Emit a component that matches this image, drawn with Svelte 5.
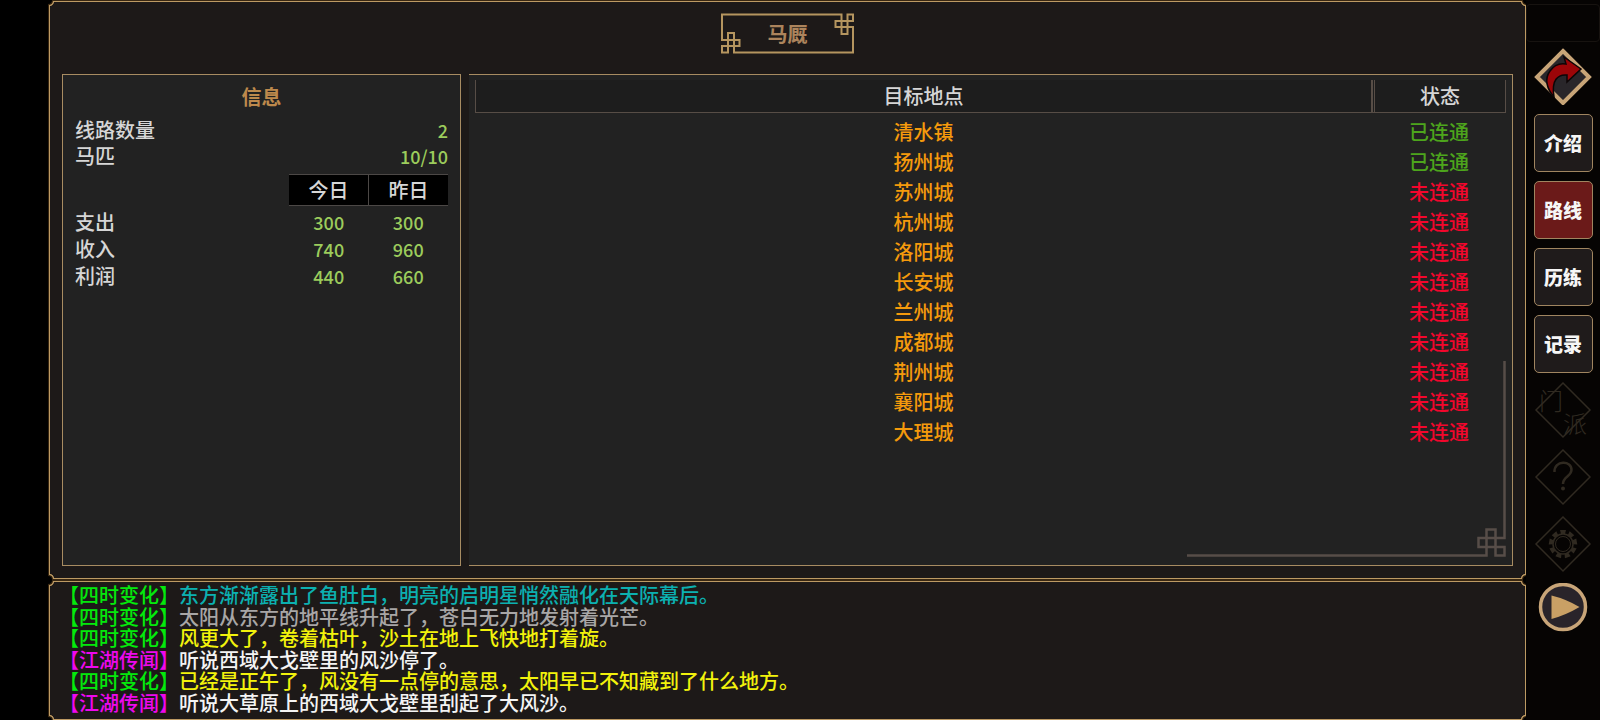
<script lang="ts">
  type Route = { name: string; linked: boolean };
  type Message = { tag: string; kind: string; tone: string; text: string };

  const ledger = [
    { label: "支出", today: 300, yesterday: 300 },
    { label: "收入", today: 740, yesterday: 960 },
    { label: "利润", today: 440, yesterday: 660 },
  ];

  const routes: Route[] = [
    { name: "清水镇", linked: true },
    { name: "扬州城", linked: true },
    { name: "苏州城", linked: false },
    { name: "杭州城", linked: false },
    { name: "洛阳城", linked: false },
    { name: "长安城", linked: false },
    { name: "兰州城", linked: false },
    { name: "成都城", linked: false },
    { name: "荆州城", linked: false },
    { name: "襄阳城", linked: false },
    { name: "大理城", linked: false },
  ];

  const messages: Message[] = [
    { tag: "四时变化", kind: "season", tone: "dawn", text: "东方渐渐露出了鱼肚白，明亮的启明星悄然融化在天际幕后。" },
    { tag: "四时变化", kind: "season", tone: "pale", text: "太阳从东方的地平线升起了，苍白无力地发射着光芒。" },
    { tag: "四时变化", kind: "season", tone: "wind", text: "风更大了，卷着枯叶，沙土在地上飞快地打着旋。" },
    { tag: "江湖传闻", kind: "rumor", tone: "plain", text: "听说西域大戈壁里的风沙停了。" },
    { tag: "四时变化", kind: "season", tone: "wind", text: "已经是正午了，风没有一点停的意思，太阳早已不知藏到了什么地方。" },
    { tag: "江湖传闻", kind: "rumor", tone: "plain", text: "听说大草原上的西域大戈壁里刮起了大风沙。" },
  ];

  const tabs = ["介绍", "路线", "历练", "记录"];
  let activeTab = $state("路线");

  // gear teeth, one every 40 degrees
  const teeth = Array.from({ length: 9 }, (_, i) => i * 40);
</script>

<div class="screen">
  <div class="main">
    <section class="window">
      <h1 class="title">
        <svg class="title-frame" viewBox="0 0 134 41" aria-hidden="true">
          <path
            d="M1 1.5H120.5V21H126.5V1.5H132V8H114.5V14H132V39.5H13V20H7V39.5H1V33H18.5V27H1Z"
            fill="none"
            stroke="#b5955f"
            stroke-width="2"
          />
        </svg>
        <span>马厩</span>
      </h1>

      <div class="columns">
        <section class="panel info">
          <h2>信息</h2>
          <dl>
            <div><dt>线路数量</dt><dd>2</dd></div>
            <div><dt>马匹</dt><dd>10/10</dd></div>
          </dl>
          <table class="ledger">
            <thead>
              <tr><td></td><th scope="col">今日</th><th scope="col">昨日</th></tr>
            </thead>
            <tbody>
              {#each ledger as row}
                <tr><th scope="row">{row.label}</th><td>{row.today}</td><td>{row.yesterday}</td></tr>
              {/each}
            </tbody>
          </table>
        </section>

        <section class="panel routes">
          <table class="route-table">
            <thead>
              <tr><th scope="col">目标地点</th><th scope="col" class="state">状态</th></tr>
            </thead>
            <tbody>
              {#each routes as route}
                <tr>
                  <td class="place">{route.name}</td>
                  <td class={route.linked ? "linked" : "unlinked"}>{route.linked ? "已连通" : "未连通"}</td>
                </tr>
              {/each}
            </tbody>
          </table>
          <svg class="corner" viewBox="0 0 320 200" aria-hidden="true">
            <path
              d="M318.5 1V178H292.500V187H318.500V195.500H309.500V169.500H300.500V195.500H1"
              fill="none"
              stroke="#574d48"
              stroke-width="2.5"
            />
          </svg>
        </section>
      </div>
    </section>

    <section class="log" aria-label="消息">
      {#each messages as message}
        <p class={message.tone}><span class={message.kind}>【{message.tag}】</span>{message.text}</p>
      {/each}
    </section>
  </div>

  <aside class="sidebar">
    <div class="slot"></div>
    <button class="icon" type="button" aria-label="返回">
      <svg viewBox="0 0 58 58">
        <path d="M29 4L55 30L29 56L3 30Z" fill="#29262a" stroke="#c8a578" stroke-width="4" />
        <path
          d="M20 50C13 42 10 32 16 24C20 18 26 16 32 17L30 10L47 22L33 35V28C24 27 17 33 20 50Z"
          fill="#9c0508"
          stroke="#0c0607"
          stroke-width="1.5"
        />
      </svg>
    </button>

    {#each tabs as tab}
      <button class="tab" class:active={tab === activeTab} type="button" onclick={() => (activeTab = tab)}>{tab}</button>
    {/each}

    <button class="icon faded sect" type="button">
      <svg viewBox="0 0 58 58" aria-hidden="true">
        <path d="M29 1L56 28L29 55L2 28Z" fill="none" stroke="currentColor" stroke-width="1.5" />
      </svg>
      <span>门</span><span>派</span>
    </button>
    <button class="icon faded" type="button" aria-label="帮助">
      <svg viewBox="0 0 58 58">
        <path d="M29 1L56 28L29 55L2 28Z" fill="none" stroke="currentColor" stroke-width="1.5" />
        <path
          d="M20.5 23C20 11 38 11 37.500 21C37 28 29 27 29 35"
          fill="none"
          stroke="currentColor"
          stroke-width="2.5"
        />
        <circle cx="29" cy="39.500" r="2" fill="currentColor" />
      </svg>
    </button>
    <button class="icon faded" type="button" aria-label="设置">
      <svg viewBox="0 0 58 58">
        <path d="M29 1L56 28L29 55L2 28Z" fill="none" stroke="currentColor" stroke-width="1.5" />
        <g transform="translate(0 -1)">
          <circle cx="29" cy="29" r="10" fill="none" stroke="currentColor" stroke-width="1.5" />
          <circle cx="29" cy="29" r="7.5" fill="none" stroke="currentColor" stroke-width="1" />
          {#each teeth as angle}
            <path d="M27 19L26 15H32L31 19Z" fill="currentColor" transform="rotate({angle} 29 29)" />
          {/each}
        </g>
      </svg>
    </button>
    <button class="icon play" type="button" aria-label="继续">
      <svg viewBox="0 0 50 50">
        <circle cx="25" cy="24" r="22.5" fill="#29242a" stroke="#c8a578" stroke-width="3.5" />
        <path d="M13.5 12.500Q28 16 41.500 24Q28 32 13.500 36Z" fill="#c9a065" />
      </svg>
    </button>
  </aside>
</div>

<style>
  :global(body) {
    margin: 0;
    background: #000;
  }
  .screen {
    box-sizing: border-box;
    display: grid;
    grid-template-columns: 1fr 74px;
    min-height: 100vh;
    padding-left: 49px;
    font-family: "Noto Sans CJK SC", sans-serif;
    font-size: 20px;
    font-weight: 500;
    line-height: 26px;
    color: #d6d6d6;
  }
  h1,
  h2,
  p,
  dl,
  dd {
    margin: 0;
    font-size: 20px;
  }
  .main {
    display: flex;
    flex-direction: column;
    gap: 2px;
    padding-top: 1px;
  }
  .window,
  .log {
    box-sizing: border-box;
    border: 1px solid #bd9a63;
    border-radius: 4px;
    corner-shape: scoop;
    background: #1d1918;
    box-shadow: 0 0 0 1px #392711;
  }
  .window {
    flex: 1;
    display: flex;
    flex-direction: column;
    padding: 11px 12px 12px;
  }
  .title {
    position: relative;
    align-self: center;
    width: 134px;
    margin-bottom: 20px;
    line-height: 41px;
    text-align: center;
    color: #ac845c;
  }
  .title-frame {
    position: absolute;
    inset: 0;
  }
  .columns {
    flex: 1;
    display: grid;
    grid-template-columns: 399px 1fr;
    gap: 8px;
  }
  .panel {
    box-sizing: border-box;
    border: 1px solid #a88c62;
    background: #222;
  }
  .info {
    padding: 9px 12px;
  }
  .info h2 {
    margin-bottom: 7px;
    text-align: center;
    color: #bd894c;
  }
  dl > div {
    display: flex;
    justify-content: space-between;
  }
  dd,
  .ledger td {
    color: #9ccc5c;
    font-size: 18px;
  }
  table {
    width: 100%;
    border-collapse: collapse;
    table-layout: fixed;
  }
  th,
  td {
    padding: 0;
    font-weight: 500;
  }
  .ledger {
    margin-top: 5px;
  }
  .ledger td {
    text-align: center;
  }
  .ledger tbody th {
    height: 27px;
    text-align: left;
  }
  .ledger thead th {
    width: 79px;
    height: 30px;
    border: 1px solid #4c4846;
    border-width: 1px 0;
    background: #000;
  }
  .ledger thead th + th {
    border-left: 1px solid #4c4846;
  }
  .ledger tbody::before {
    content: "";
    display: block;
    height: 3px;
  }
  .routes {
    position: relative;
    border-left: 0;
    padding: 5px 6px 0;
  }
  .route-table {
    border-collapse: separate;
    border-spacing: 0;
    text-align: center;
  }
  .route-table th {
    height: 32px;
    border: 1px solid #574d46;
    border-top: 0;
    background: #1d1d1d;
  }
  .route-table .state {
    width: 130px;
    border-left: 3px double #574d46;
  }
  .route-table tbody::before {
    content: "";
    display: block;
    height: 4px;
  }
  .route-table td {
    height: 30px;
  }
  .place {
    color: #f59a0c;
  }
  .linked {
    color: #4da51c;
  }
  .unlinked {
    color: #f3062c;
  }
  .corner {
    position: absolute;
    right: 6px;
    bottom: 5px;
    width: 320px;
    height: 200px;
  }
  .log {
    display: flex;
    flex-direction: column;
    justify-content: space-between;
    min-height: 139px;
    padding: 4px 9px;
    font-family: "Liberation Sans", "Noto Sans CJK SC", sans-serif;
    line-height: 21px;
  }
  .season {
    color: #04e90c;
  }
  .rumor {
    color: #ee08ee;
  }
  .dawn {
    color: #0cb0b0;
  }
  .pale {
    color: #a8a6a6;
  }
  .wind {
    color: #f2f20c;
  }
  .plain {
    color: #f4f4f4;
  }
  .sidebar {
    display: flex;
    flex-direction: column;
    align-items: center;
    gap: 9px;
    padding-top: 4px;
    background: #060403;
  }
  .slot {
    box-sizing: border-box;
    align-self: stretch;
    height: 38px;
    margin-bottom: -4px;
    border: 1px solid #171310;
    border-radius: 4px;
  }
  button {
    box-sizing: border-box;
    padding: 0;
    border: 0;
    background: none;
    font: inherit;
    cursor: pointer;
  }
  svg {
    display: block;
  }
  .tab {
    width: 59px;
    height: 58px;
    border: 1px solid #a08560;
    border-radius: 5px;
    background: #1f1b1b;
    color: #f6f6f6;
    font-size: 19px;
    font-weight: 900;
  }
  .tab.active {
    background: #6b1a19;
  }
  .icon {
    width: 58px;
    height: 58px;
  }
  .faded {
    color: #302a21;
  }
  .sect {
    position: relative;
    display: grid;
    grid-template-columns: 24px 24px;
    place-content: center;
    font-size: 24px;
    font-weight: 300;
    line-height: 23px;
  }
  .sect svg {
    position: absolute;
    inset: 0;
  }
  .sect span:first-of-type {
    grid-area: 1 / 1;
  }
  .sect span:last-of-type {
    grid-area: 2 / 2;
  }
  .play {
    width: 50px;
    height: 50px;
  }
</style>
